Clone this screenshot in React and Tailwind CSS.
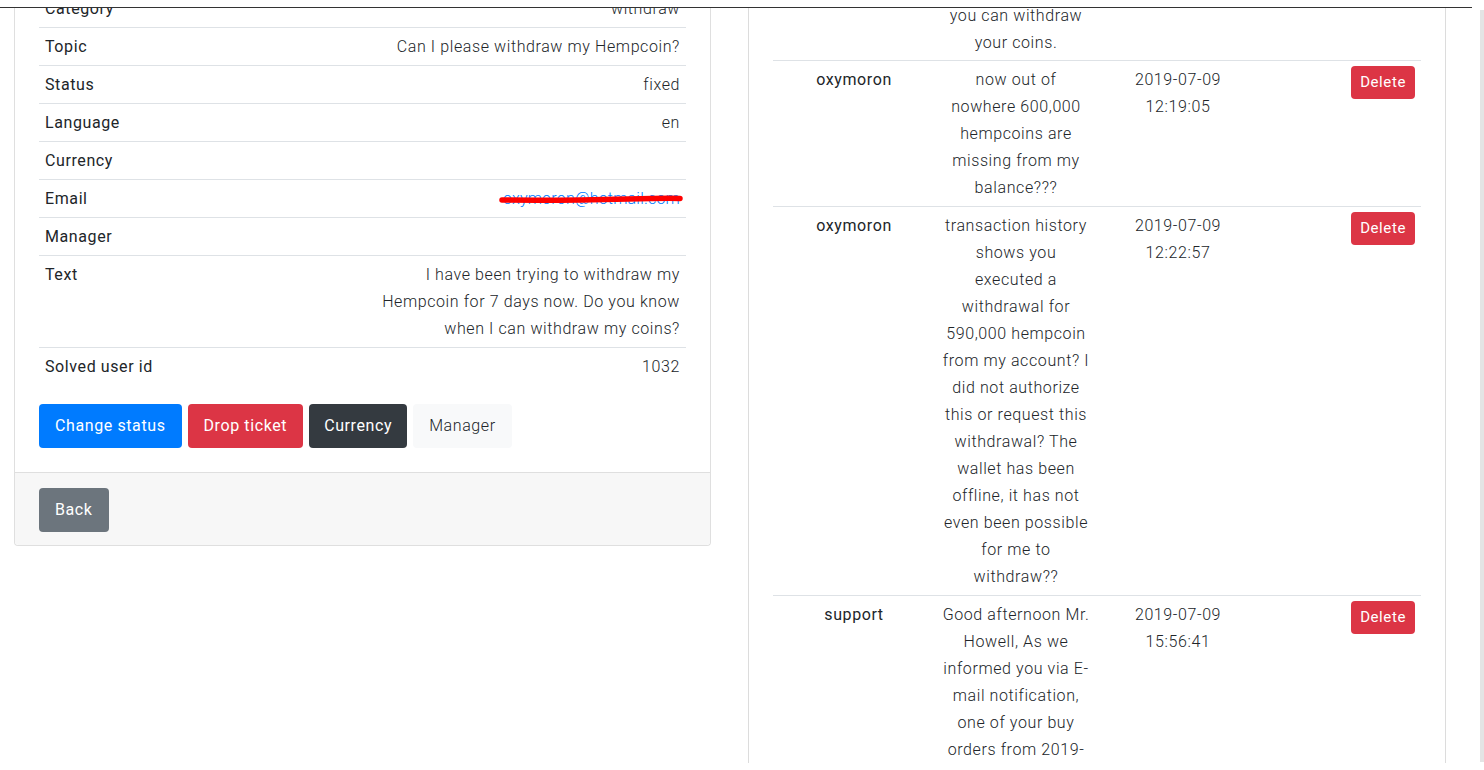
import React from 'react';

const details = [
  { label: 'Category', value: 'withdraw' },
  { label: 'Topic', value: 'Can I please withdraw my Hempcoin?' },
  { label: 'Status', value: 'fixed' },
  { label: 'Language', value: 'en' },
  { label: 'Currency', value: '' },
  { label: 'Email', value: 'oxymoron@hotmail.com', email: true },
  { label: 'Manager', value: '' },
  { label: 'Text', value: 'I have been trying to withdraw my Hempcoin for 7 days now. Do you know when I can withdraw my coins?' },
  { label: 'Solved user id', value: '1032' },
];

const messages = [
  {
    user: 'oxymoron',
    text: 'now out of nowhere 600,000 hempcoins are missing from my balance???',
    date: '2019-07-09 12:19:05',
  },
  {
    user: 'oxymoron',
    text: 'transaction history shows you executed a withdrawal for 590,000 hempcoin from my account? I did not authorize this or request this withdrawal? The wallet has been offline, it has not even been possible for me to withdraw??',
    date: '2019-07-09 12:22:57',
  },
  {
    user: 'support',
    text: 'Good afternoon Mr. Howell, As we informed you via E-mail notification, one of your buy orders from 2019-07-08 was executed and the coins were sent to your wallet.',
    date: '2019-07-09 15:56:41',
  },
];

function TicketCard() {
  return (
    <div className="w-[697px] -mt-[19px] border border-t-0 border-[#dfdfdf] rounded-b-[4px] bg-white">
      <div className="px-[24px] pb-[24px]">
        <div>
          {details.map((row) => (
            <div key={row.label} className="grid grid-cols-2 border-t border-[#dee2e6] leading-[27px]">
              <div className="px-[6px] py-[5px] font-normal">{row.label}</div>
              <div className="relative px-[6px] py-[5px] text-right font-light">
                {row.email ? (
                  <>
                    <span className="text-[#007bff] tracking-[0.2px]">{row.value}</span>
                    <svg className="absolute right-[2px] top-[14px] w-[186px] h-[10px]" viewBox="0 0 186 10">
                      <path d="M4 6 C 40 6.5, 90 6, 130 5 S 170 4, 182 4.5" stroke="#ff0000" strokeWidth="5.5" strokeLinecap="round" fill="none" />
                    </svg>
                  </>
                ) : (
                  row.value
                )}
              </div>
            </div>
          ))}
        </div>
        <div className="mt-[19px] flex gap-[6px]">
          <button className="h-[44px] px-[16px] rounded-[4px] bg-[#007bff] text-white">Change status</button>
          <button className="h-[44px] px-[16px] rounded-[4px] bg-[#dc3545] text-white">Drop ticket</button>
          <button className="h-[44px] px-[15px] rounded-[4px] bg-[#343a40] text-white">Currency</button>
          <button className="h-[44px] px-[16px] rounded-[4px] bg-[#f8f9fa] text-[#212529] font-light">Manager</button>
        </div>
      </div>
      <div className="border-t border-[#dfdfdf] bg-[#f7f7f7] px-[24px] pt-[15px] pb-[13px] rounded-b-[4px]">
        <button className="h-[44px] px-[16px] rounded-[4px] bg-[#6c757d] text-white">Back</button>
      </div>
    </div>
  );
}

function MessagesCard() {
  return (
    <div className="w-[698px] ml-[37px] -mt-[6px] border-x border-[#dcdcdc] bg-white px-[24px] min-h-[780px]">
      <div className="grid grid-cols-4 leading-[27px]">
        <div />
        <div className="px-[7px] pb-[4px] text-center font-light">you can withdraw your coins.</div>
        <div />
        <div />
      </div>
      {messages.map((m, i) => (
        <div key={i} className="grid grid-cols-4 border-t border-[#dee2e6] leading-[27px]">
          <div className="px-[6px] py-[5px] text-center">{m.user}</div>
          <div className="px-[7px] py-[5px] text-center font-light">{m.text}</div>
          <div className="px-[6px] py-[5px] text-center font-light">
            {m.date.split(' ')[0]}
            <br />
            {m.date.split(' ')[1]}
          </div>
          <div className="px-[6px] py-[5px] text-right">
            <button className="h-[33px] px-[9px] rounded-[4px] bg-[#dc3545] text-white text-[15px] leading-[23px]">Delete</button>
          </div>
        </div>
      ))}
    </div>
  );
}

export default function App() {
  return (
    <div className="w-[1484px] h-[770px] overflow-hidden flex bg-white text-[16px] tracking-[0.6px] text-[#212529] font-['Roboto','Liberation_Sans',sans-serif]">
      <div className="w-[1472px]">
        <div className="h-[8px] border-b border-[#333333]" />
        <div className="h-[755px] overflow-hidden flex items-start pl-[14px]">
          <TicketCard />
          <MessagesCard />
        </div>
      </div>
      <div className="w-[12px] flex justify-end pt-[10px]">
        <div className="w-[4px] h-[752px] bg-[#e4e4e4]" />
      </div>
    </div>
  );
}
